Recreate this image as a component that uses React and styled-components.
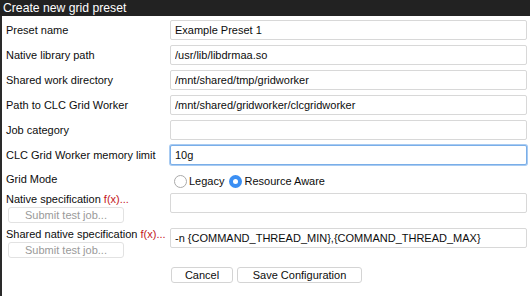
import React from "react";
import styled, { createGlobalStyle } from "styled-components";

const GlobalStyle = createGlobalStyle`
  html, body {
    margin: 0;
    padding: 0;
    background: #fff;
  }
  body {
    font-family: "Liberation Sans", Arial, Helvetica, sans-serif;
    color: #111;
  }
`;

const Dialog = styled.div`
  width: 530px;
  height: 296px;
  overflow: hidden;
  background: #fff;
`;

const TitleBar = styled.div`
  height: 16px;
  line-height: 16px;
  background: #222;
  color: #fff;
  font-size: 12.2px;
  padding-left: 3px;
`;

const Body = styled.div`
  height: 280px;
  box-sizing: border-box;
  border-left: 2px solid #2a2a2a;
  padding: 4px 3px 0 4px;
  display: flex;
  flex-direction: column;
  gap: 5px;
`;

const Row = styled.div`
  display: grid;
  grid-template-columns: 164px 357px;
  align-items: ${(p) => (p.$top ? "start" : "center")};
  min-height: ${(p) => (p.$short ? "18px" : "20px")};
`;

const LabelCell = styled.div`
  display: flex;
  flex-direction: column;
  gap: 1px;
`;

const Label = styled.label`
  font-size: 11px;
  line-height: 13px;
  color: #0d0d0d;
`;

const Fx = styled.span`
  color: #c3161c;
`;

const Input = styled.input`
  box-sizing: border-box;
  width: 357px;
  height: 20px;
  margin: 0;
  padding: 0 4px;
  border: 1px solid ${(p) => (p.$focused ? "#7aaee8" : "#d8d8d8")};
  border-radius: 2px;
  box-shadow: ${(p) => (p.$focused ? "0 0 0 1px #a8cbf2" : "none")};
  font-family: "Liberation Sans", Arial, sans-serif;
  font-size: 11px;
  color: #0d0d0d;
  background: #fff;
  outline: none;
`;

const SubmitButton = styled.button`
  box-sizing: border-box;
  width: 116px;
  height: 16px;
  margin: 0 0 0 2px;
  padding: 0;
  border: 1px solid #e2e2e2;
  border-radius: 3px;
  background: #fff;
  color: #9a9a9a;
  font-family: "Liberation Sans", Arial, sans-serif;
  font-size: 11px;
  line-height: 14px;
`;

const RadioGroup = styled.div`
  display: flex;
  align-items: center;
  padding-left: 4px;
  margin-top: 4px;
  font-size: 11px;
  color: #0d0d0d;
`;

const RadioOption = styled.span`
  display: inline-flex;
  align-items: center;
  gap: 2px;
  margin-right: 5px;
`;

const RadioDot = styled.span`
  box-sizing: border-box;
  width: 13px;
  height: 13px;
  border-radius: 50%;
  border: ${(p) => (p.$checked ? "none" : "1px solid #aaa")};
  background: ${(p) => (p.$checked ? "#3b8ff3" : "#fff")};
  display: inline-flex;
  align-items: center;
  justify-content: center;
  &::after {
    content: "";
    width: 5px;
    height: 5px;
    border-radius: 50%;
    background: #fff;
    display: ${(p) => (p.$checked ? "block" : "none")};
  }
`;

const Actions = styled.div`
  display: flex;
  gap: 4px;
  margin-top: 4px;
  padding-left: 165px;
`;

const ActionButton = styled.button`
  box-sizing: border-box;
  width: ${(p) => p.$w}px;
  height: 16px;
  margin: 0;
  padding: 0;
  border: 1px solid #d4d4d4;
  border-radius: 3px;
  background: #fff;
  color: #0d0d0d;
  font-family: "Liberation Sans", Arial, sans-serif;
  font-size: 11px;
  line-height: 14px;
`;

const fields = [
  ["Preset name", "Example Preset 1"],
  ["Native library path", "/usr/lib/libdrmaa.so"],
  ["Shared work directory", "/mnt/shared/tmp/gridworker"],
  ["Path to CLC Grid Worker", "/mnt/shared/gridworker/clcgridworker"],
  ["Job category", ""],
  ["CLC Grid Worker memory limit", "10g", true],
];

export default function App() {
  return (
    <Dialog>
      <GlobalStyle />
      <TitleBar>Create new grid preset</TitleBar>
      <Body>
        {fields.map(([label, value, focused]) => (
          <Row key={label}>
            <Label>{label}</Label>
            <Input defaultValue={value} $focused={focused} readOnly />
          </Row>
        ))}
        <Row $short>
          <Label>Grid Mode</Label>
          <RadioGroup>
            <RadioOption>
              <RadioDot />
              Legacy
            </RadioOption>
            <RadioOption>
              <RadioDot $checked />
              Resource Aware
            </RadioOption>
          </RadioGroup>
        </Row>
        <Row $top>
          <LabelCell>
            <Label>
              Native specification <Fx>f(x)...</Fx>
            </Label>
            <SubmitButton disabled>Submit test job...</SubmitButton>
          </LabelCell>
          <Input defaultValue="" readOnly />
        </Row>
        <Row $top>
          <LabelCell>
            <Label>
              Shared native specification <Fx>f(x)...</Fx>
            </Label>
            <SubmitButton disabled>Submit test job...</SubmitButton>
          </LabelCell>
          <Input
            defaultValue="-n {COMMAND_THREAD_MIN},{COMMAND_THREAD_MAX}"
            readOnly
          />
        </Row>
        <Actions>
          <ActionButton $w={62}>Cancel</ActionButton>
          <ActionButton $w={125}>Save Configuration</ActionButton>
        </Actions>
      </Body>
    </Dialog>
  );
}
